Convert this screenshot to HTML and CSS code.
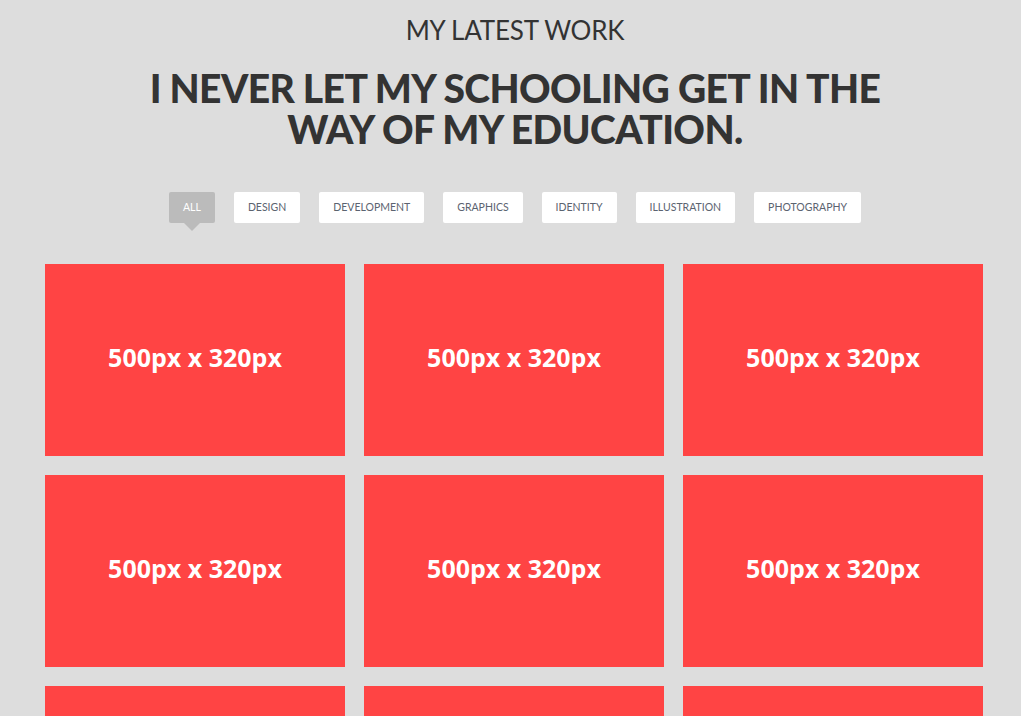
FILE: index.html
```html
<!DOCTYPE html>
<html>
<head>
<meta charset="utf-8">
<link rel="stylesheet" href="styles.css">
</head>
<body>
<section class="work">
  <h2 class="kicker">MY LATEST WORK</h2>
  <h1 class="headline">I NEVER LET MY SCHOOLING GET IN THE<br>WAY OF MY EDUCATION.</h1>
  <ul class="filters">
    <li class="filter active">ALL</li>
    <li class="filter">DESIGN</li>
    <li class="filter">DEVELOPMENT</li>
    <li class="filter">GRAPHICS</li>
    <li class="filter">IDENTITY</li>
    <li class="filter">ILLUSTRATION</li>
    <li class="filter">PHOTOGRAPHY</li>
  </ul>
  <div class="grid">
    <div class="card">500px x 320px</div>
    <div class="card">500px x 320px</div>
    <div class="card">500px x 320px</div>
    <div class="card">500px x 320px</div>
    <div class="card">500px x 320px</div>
    <div class="card">500px x 320px</div>
    <div class="card">500px x 320px</div>
    <div class="card">500px x 320px</div>
    <div class="card">500px x 320px</div>
  </div>
</section>
</body>
</html>
```
FILE: styles.css
```css
html, body {
  margin: 0;
  padding: 0;
  background: #dddddd;
  overflow: hidden;
}
.work {
  font-family: "Lato", "Noto Sans", sans-serif;
  color: #333333;
  text-align: center;
  padding: 15px 0 0 9px;
}
.kicker {
  margin: 0;
  font-weight: 400;
  font-size: 26px;
  line-height: 30px;
  letter-spacing: -0.2px;
  color: #333;
}
.headline {
  margin: 23px 0 0;
  font-weight: 900;
  font-size: 39px;
  line-height: 41px;
  letter-spacing: -0.6px;
  color: #333;
}
.filters {
  list-style: none;
  margin: 42px 0 0;
  padding: 0;
  display: flex;
  justify-content: center;
  gap: 19px;
}
.filter {
  position: relative;
  background: #ffffff;
  color: #5b6370;
  font-family: "Lato", sans-serif;
  font-size: 10.5px;
  height: 31px;
  line-height: 31px;
  padding: 0 14px;
  border-radius: 2px;
}
.filter.active {
  background: #bbbbbb;
  color: #ffffff;
}
.filter.active::after {
  content: "";
  position: absolute;
  left: 50%;
  bottom: -8px;
  margin-left: -8px;
  border-left: 8px solid transparent;
  border-right: 8px solid transparent;
  border-top: 8px solid #bbbbbb;
}
.grid {
  margin: 41px 0 0 36px;
  display: grid;
  grid-template-columns: repeat(3, 300px);
  gap: 19px;
}
.card {
  height: 186px;
  padding-bottom: 6px;
  background: #ff4444;
  color: #ffffff;
  font-family: "Open Sans", sans-serif;
  font-weight: 700;
  font-size: 25px;
  display: flex;
  align-items: center;
  justify-content: center;
}
```
